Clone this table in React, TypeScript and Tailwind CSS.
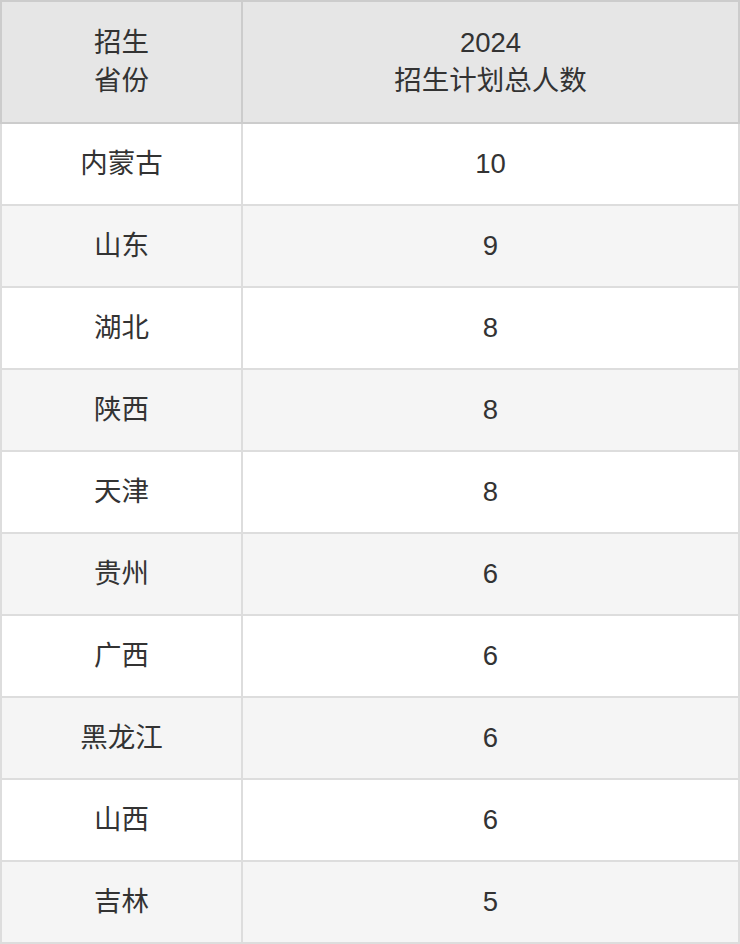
import React from "react";

const rows: [string, string][] = [
  ["内蒙古", "10"],
  ["山东", "9"],
  ["湖北", "8"],
  ["陕西", "8"],
  ["天津", "8"],
  ["贵州", "6"],
  ["广西", "6"],
  ["黑龙江", "6"],
  ["山西", "6"],
  ["吉林", "5"],
];

export default function App() {
  return (
    <div
      className="w-[740px] text-[27.5px] text-[#333333]"
      style={{ fontFamily: '"Liberation Sans", "Noto Sans CJK SC", sans-serif' }}
    >
      <div className="flex h-[124px] border-2 border-[#cccccc] bg-[#e6e6e6]">
        <div className="flex w-[241px] flex-col items-center justify-center border-r-2 border-[#cccccc] leading-[38px]">
          <span>招生</span>
          <span>省份</span>
        </div>
        <div className="flex flex-1 flex-col items-center justify-center leading-[38px]">
          <span>2024</span>
          <span>招生计划总人数</span>
        </div>
      </div>
      {rows.map(([p, n], i) => (
        <div
          key={p}
          className={
            "flex h-[82px] border-x-2 border-b-2 border-[#dddddd] " +
            (i % 2 === 0 ? "bg-white" : "bg-[#f5f5f5]")
          }
        >
          <div className="flex w-[241px] items-center justify-center border-r-2 border-[#dddddd]">
            {p}
          </div>
          <div className="flex flex-1 items-center justify-center">{n}</div>
        </div>
      ))}
    </div>
  );
}
